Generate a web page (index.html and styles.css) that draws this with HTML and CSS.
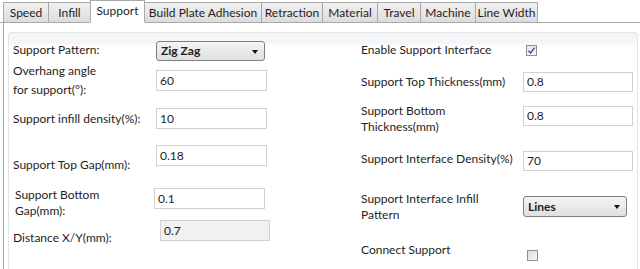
FILE: index.html
```html
<!DOCTYPE html>
<html>
<head>
<meta charset="utf-8">
<link rel="stylesheet" href="styles.css">
</head>
<body>
<div class="tabs">
  <div class="tab w-speed">Speed</div>
  <div class="tab w-infill">Infill</div>
  <div class="tab active w-support">Support</div>
  <div class="tab w-build">Build Plate Adhesion</div>
  <div class="tab w-retr">Retraction</div>
  <div class="tab w-mat">Material</div>
  <div class="tab w-travel">Travel</div>
  <div class="tab w-mach">Machine</div>
  <div class="tab w-line">Line Width</div>
</div>
<div class="panel">
  <div class="group">
    <div class="col left">
      <div class="row r1">
        <div class="label">Support Pattern:</div>
        <div class="combo">Zig Zag<span class="arrow"></span></div>
      </div>
      <div class="row r2">
        <div class="label lh18">Overhang angle<br>for support(°):</div>
        <div class="input">60</div>
      </div>
      <div class="row r3">
        <div class="label">Support infill density(%):</div>
        <div class="input">10</div>
      </div>
      <div class="row r4">
        <div class="label">Support Top Gap(mm):</div>
        <div class="input">0.18</div>
      </div>
      <div class="row r5">
        <div class="label">Support Bottom<br>Gap(mm):</div>
        <div class="input">0.1</div>
      </div>
      <div class="row r6">
        <div class="label">Distance X/Y(mm):</div>
        <div class="input disabled">0.7</div>
      </div>
    </div>
    <div class="col right">
      <div class="row q1">
        <div class="label">Enable Support Interface</div>
        <div class="check checked"><svg width="9" height="9" viewBox="0 0 9 9"><path d="M1.5 4.8 L3.6 7 L7.6 1.6" fill="none" stroke="#3a50a8" stroke-width="1.4"/></svg></div>
      </div>
      <div class="row q2">
        <div class="label">Support Top Thickness(mm)</div>
        <div class="input">0.8</div>
      </div>
      <div class="row q3">
        <div class="label">Support Bottom<br>Thickness(mm)</div>
        <div class="input">0.8</div>
      </div>
      <div class="row q4">
        <div class="label">Support Interface Density(%)</div>
        <div class="input">70</div>
      </div>
      <div class="row q5">
        <div class="label">Support Interface Infill<br>Pattern</div>
        <div class="combo">Lines<span class="arrow"></span></div>
      </div>
      <div class="row q6">
        <div class="label">Connect Support</div>
        <div class="check"></div>
      </div>
    </div>
  </div>
</div>
</body>
</html>
```
FILE: styles.css
```css
* { box-sizing: border-box; }
html, body { margin: 0; padding: 0; }
body {
  width: 640px;
  height: 269px;
  overflow: hidden;
  background: #fff;
  font-family: Lato, "Noto Sans", sans-serif;
  font-size: 12px;
  color: #1e1e1e;
}
.tabs {
  display: flex;
  align-items: flex-end;
  height: 23px;
  padding-left: 3px;
  border-bottom: 1px solid #a9a9a9;
}
.tab {
  height: 21px;
  margin-bottom: -1px;
  border: 1px solid #a9a9a9;
  border-right: none;
  background: linear-gradient(#f1f1f1, #dcdcdc);
  text-align: center;
  line-height: 19px;
  white-space: nowrap;
}
.tab:nth-last-child(1) { border-right: 1px solid #a9a9a9; }
.tab.active {
  height: 23px;
  background: #fff;
  border-bottom: 1px solid #fff;
  border-right: 1px solid #a9a9a9;
  line-height: 19px;
  margin-right: -1px;
  position: relative;
}
.w-speed { width: 45px; }
.w-infill { width: 42px; }
.w-support { width: 55px; }
.w-build { width: 117px; }
.w-retr { width: 61px; }
.w-mat { width: 55px; }
.w-travel { width: 43px; }
.w-mach { width: 55px; }
.w-line { width: 63px; }

.panel {
  margin-left: 3px;
  border-left: 1px solid #a9a9a9;
  height: 246px;
  padding: 9px 2px 0 4px;
}
.group {
  display: flex;
  height: 250px;
  border: 1px solid #e2e4e6;
  border-radius: 3px;
  background: linear-gradient(#f3f5f7 0, #f5f6f8 11px, #ffffff 12px, #ffffff 100%);
  padding-top: 8px;
}
.col { display: flex; flex-direction: column; }
.left { width: 352px; padding-left: 4px; }
.right { flex: 1; }

.row { display: flex; align-items: flex-start; }
.label { line-height: 16px; white-space: nowrap; }
.lh18 { line-height: 18.5px; }
.left .label { width: 143px; }
.right .label { width: 162px; }

.input {
  height: 21px;
  width: 111px;
  border: 1px solid #cfd1d3;
  background: #fff;
  padding-left: 3px;
  line-height: 19px;
}
.right .input { width: 110px; height: 20px; line-height: 18px; }
.input.disabled { background: #f1f1f1; width: 110px; margin-left: 4px; }

.combo {
  position: relative;
  height: 20px;
  width: 109px;
  border: 1px solid #7f7f7f;
  border-radius: 3px;
  background: linear-gradient(#f4f4f4, #e0e0e0);
  padding-left: 4px;
  line-height: 18px;
  font-weight: 700;
  color: #222;
}
.right .combo { width: 104px; height: 21px; line-height: 19px; }
.arrow {
  position: absolute;
  right: 6px;
  top: 8px;
  border-left: 3.5px solid transparent;
  border-right: 3.5px solid transparent;
  border-top: 4px solid #111;
}

.check {
  width: 11px;
  height: 11px;
  border: 1px solid #8e8f8f;
  background: linear-gradient(135deg, #dcdcdc, #f6f6f6);
  display: flex;
  align-items: center;
  justify-content: center;
}
.check.checked { background: linear-gradient(135deg, #e4e4e4, #fafafa); }

/* left column rows */
.r1 { height: 20px; }
.r1 .label { margin-top: 1px; }
.r2 { height: 38px; }
.r2 .label { margin-top: 1px; }
.r2 .input { margin-top: 9px; }
.r3 { height: 42px; }
.r3 .label { margin-top: 12px; }
.r3 .input { margin-top: 9px; }
.r4 { height: 40px; }
.r4 .label { margin-top: 16px; }
.r4 .input { margin-top: 4px; }
.r5 { height: 37px; }
.r5 .label { margin-top: 6px; padding-left: 2px; }
.r5 .input { margin-top: 7px; margin-left: -2px; }
.r6 { height: 30px; }
.r6 .label { margin-top: 12px; }
.r6 .input { margin-top: 2px; }

/* right column rows */
.q1 { height: 24px; }
.q1 .label { margin-top: 1px; }
.q1 .check { margin-top: 4px; margin-left: 3px; }
.q2 { height: 34px; }
.q2 .label { margin-top: 9px; }
.q2 .input { margin-top: 7px; }
.q3 { height: 38px; }
.q3 .label { margin-top: 4px; }
.q3 .input { margin-top: 7px; }
.q4 { height: 48px; }
.q4 .label { margin-top: 14px; }
.q4 .input { margin-top: 14px; }
.q5 { height: 46px; }
.q5 .label { margin-top: 6px; }
.q5 .combo { margin-top: 11px; }
.q6 .label { margin-top: 11px; }
.q6 .check { margin-top: 19px; margin-left: 4px; }
```
